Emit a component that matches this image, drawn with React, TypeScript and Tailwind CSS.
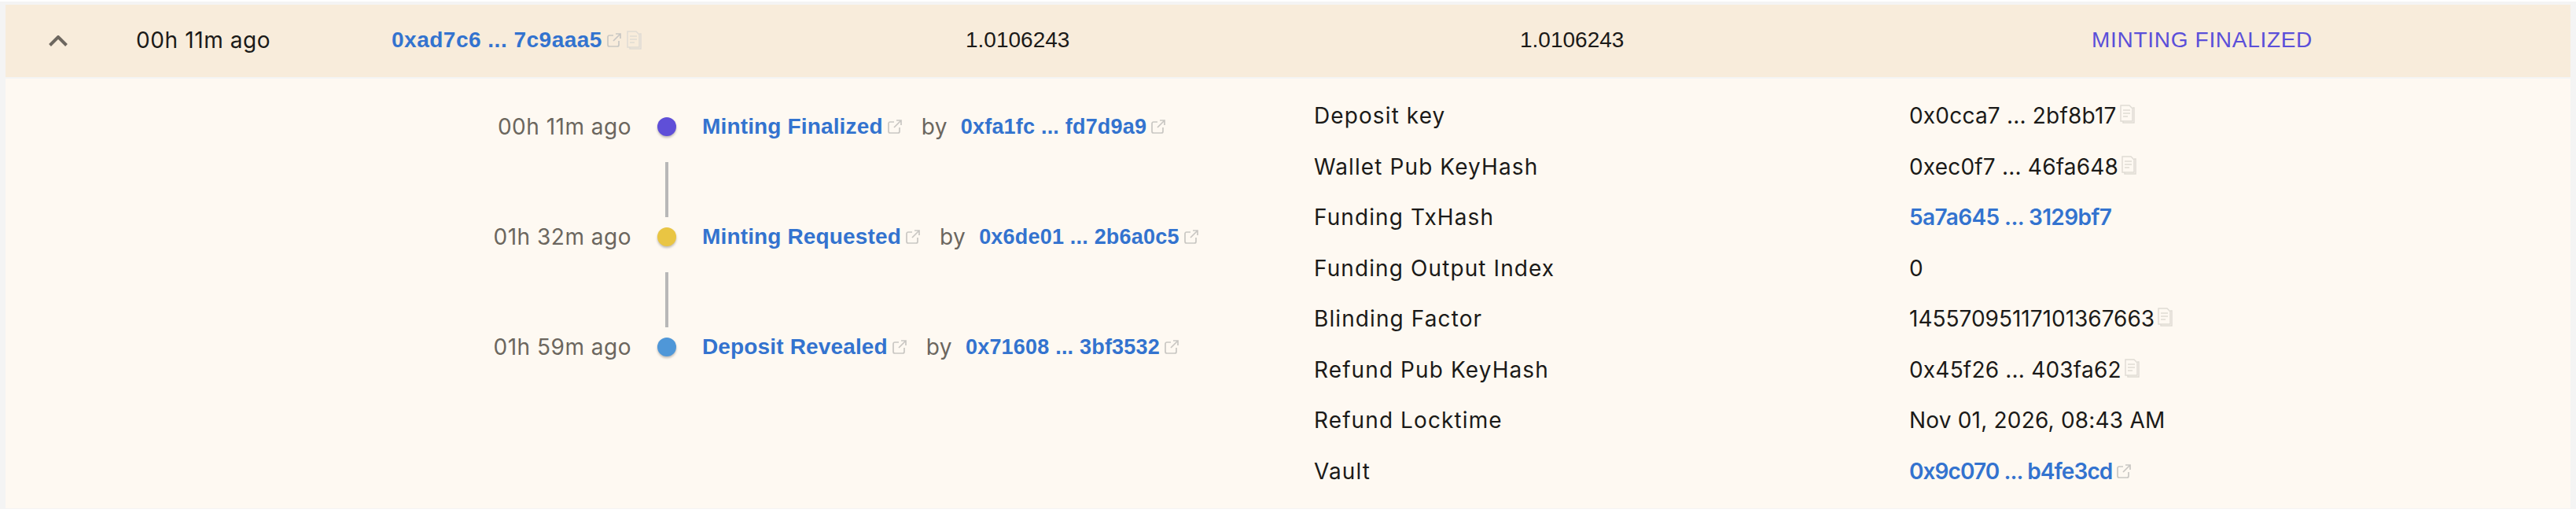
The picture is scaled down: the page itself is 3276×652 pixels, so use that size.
const Ext = ({ className = "" }: { className?: string }) => (
  <svg viewBox="0 0 18 18" fill="none" stroke="#c9c7c3" strokeWidth="1.7" className={"w-[18px] h-[18px] shrink-0 " + className}>
    <path d="M8 3H3a2 2 0 0 0-2 2v10a2 2 0 0 0 2 2h10a2 2 0 0 0 2-2v-5" />
    <path d="M8 10 16.5 1.500M11 1h6v6" />
  </svg>
);

const Copy = ({ className = "" }: { className?: string }) => (
  <svg viewBox="0 0 20 24" fill="none" stroke="#dfdbd4" strokeWidth="1.4" className={"w-5 h-6 shrink-0 " + className}>
    <path d="M2 1h11l4 4v16H2z" />
    <path d="M17 4h2v19H5v-2" />
    <path d="M5 7h9M5 11h9M5 15h6" />
  </svg>
);

const sans = "font-['Liberation_Sans',sans-serif]";
const body = "font-['Inter',sans-serif]";

const timeline = [
  { ago: "00h 11m ago", color: "bg-[#5f4fd8]", title: "Minting Finalized", addr: "0xfa1fc ... fd7d9a9" },
  { ago: "01h 32m ago", color: "bg-[#e9c543]", title: "Minting Requested", addr: "0x6de01 ... 2b6a0c5" },
  { ago: "01h 59m ago", color: "bg-[#4f97d8]", title: "Deposit Revealed", addr: "0x71608 ... 3bf3532" },
];

const details: { k: string; v: string; kind: "copy" | "plain" | "link" | "linkext"; t: string }[] = [
  { k: "Deposit key", v: "0x0cca7 ... 2bf8b17", kind: "copy", t: "tracking-[0.2px]" },
  { k: "Wallet Pub KeyHash", v: "0xec0f7 ... 46fa648", kind: "copy", t: "tracking-[0.2px]" },
  { k: "Funding TxHash", v: "5a7a645 ... 3129bf7", kind: "link", t: "tracking-[-0.6px]" },
  { k: "Funding Output Index", v: "0", kind: "plain", t: "" },
  { k: "Blinding Factor", v: "14557095117101367663", kind: "copy", t: "tracking-[0px]" },
  { k: "Refund Pub KeyHash", v: "0x45f26 ... 403fa62", kind: "copy", t: "tracking-[0.2px]" },
  { k: "Refund Locktime", v: "Nov 01, 2026, 08:43 AM", kind: "plain", t: "tracking-[0.2px]" },
  { k: "Vault", v: "0x9c070 ... b4fe3cd", kind: "linkext", t: "tracking-[-0.9px]" },
];

export default function App() {
  return (
    <div className="w-[3276px] h-[652px] overflow-hidden bg-white">
      <div className="h-[652px] pt-[2px]">
        <div className="h-[645px] bg-[#f4f4f4] px-[7px] py-[4px]">
          <div className="flex items-center h-[92px] bg-[#f8ecdb] text-[28px] text-[#1b1a18]">
            <div className="w-[166px] pl-[55px] shrink-0">
              <svg viewBox="0 0 24 14" fill="none" stroke="#6d675f" strokeWidth="4" className="w-6 h-[14px]">
                <path d="M1.5 12.5 12 2l10.500 10.500" />
              </svg>
            </div>
            <div className={`w-[325px] shrink-0 text-[28px] tracking-[0.6px] ${body} -mt-[2px]`}>00h 11m ago</div>
            <div className={`w-[730px] shrink-0 flex items-center -mt-[2px] ${sans}`}>
              <span className="font-bold tracking-[0.5px] text-[#3373cf]">0xad7c6 ... 7c9aaa5</span>
              <Ext className="ml-[6px]" />
              <Copy className="ml-[6px]" />
            </div>
            <div className={`w-[705px] shrink-0 -mt-[2px] ${sans}`}>1.0106243</div>
            <div className={`w-[727px] shrink-0 -mt-[2px] ${sans}`}>1.0106243</div>
            <div className={`${sans} text-[28px] tracking-[0.7px] text-[#5b4fd9] -mt-[2px]`}>MINTING FINALIZED</div>
          </div>
          <div className="flex h-[546px] bg-[#fef9f2] mt-[2px]">
            <div className="w-[1664px] shrink-0 pt-[39px] flex flex-col">
              {timeline.map((t, i) => (
                <div key={t.title} className="relative h-[140px] flex items-start">
                  <div className={`w-[796px] h-[44px] shrink-0 flex items-center justify-end text-[28px] tracking-[0.5px] text-[#6b665e] ${body}`}>{t.ago}</div>
                  <div className="w-[90px] h-[44px] shrink-0 pl-[33px] flex items-center">
                    <span className={`w-6 h-6 rounded-full ${t.color} shadow-[0_2px_3px_rgba(0,0,0,0.25)]`} />
                  </div>
                  <div className={`h-[44px] flex items-center ${sans}`}>
                    <span className="text-[28px] tracking-[0.15px] font-bold text-[#3373cf]">{t.title}</span>
                    <Ext className="ml-[6px]" />
                    <span className={`ml-[25px] text-[28px] tracking-[0.4px] text-[#6b665e] ${body}`}>by</span>
                    <span className="ml-[17px] text-[27px] tracking-[0.2px] font-bold text-[#3373cf]">{t.addr}</span>
                    <Ext className="ml-[6px]" />
                  </div>
                  {i < 2 && <div className="absolute left-[839px] top-[67px] w-1 h-[70px] bg-[#b8b8b8]" />}
                </div>
              ))}
            </div>
            <div className="flex-1 pt-[15px] flex flex-col">
              {details.map((d) => (
                <div key={d.k} className={`flex items-center h-[64.5px] text-[28px] text-[#1b1a18] ${body}`}>
                  <div className="w-[757px] shrink-0 tracking-[1.1px]">{d.k}</div>
                  <div className="flex items-center">
                    <span className={(d.kind === "link" || d.kind === "linkext" ? "font-semibold text-[#3373cf] " : "") + d.t}>{d.v}</span>
                    {d.kind === "copy" && <Copy className="ml-[3px] -mt-[4px]" />}
                    {d.kind === "linkext" && <Ext className="ml-[6px]" />}
                  </div>
                </div>
              ))}
            </div>
          </div>
        </div>
      </div>
    </div>
  );
}
